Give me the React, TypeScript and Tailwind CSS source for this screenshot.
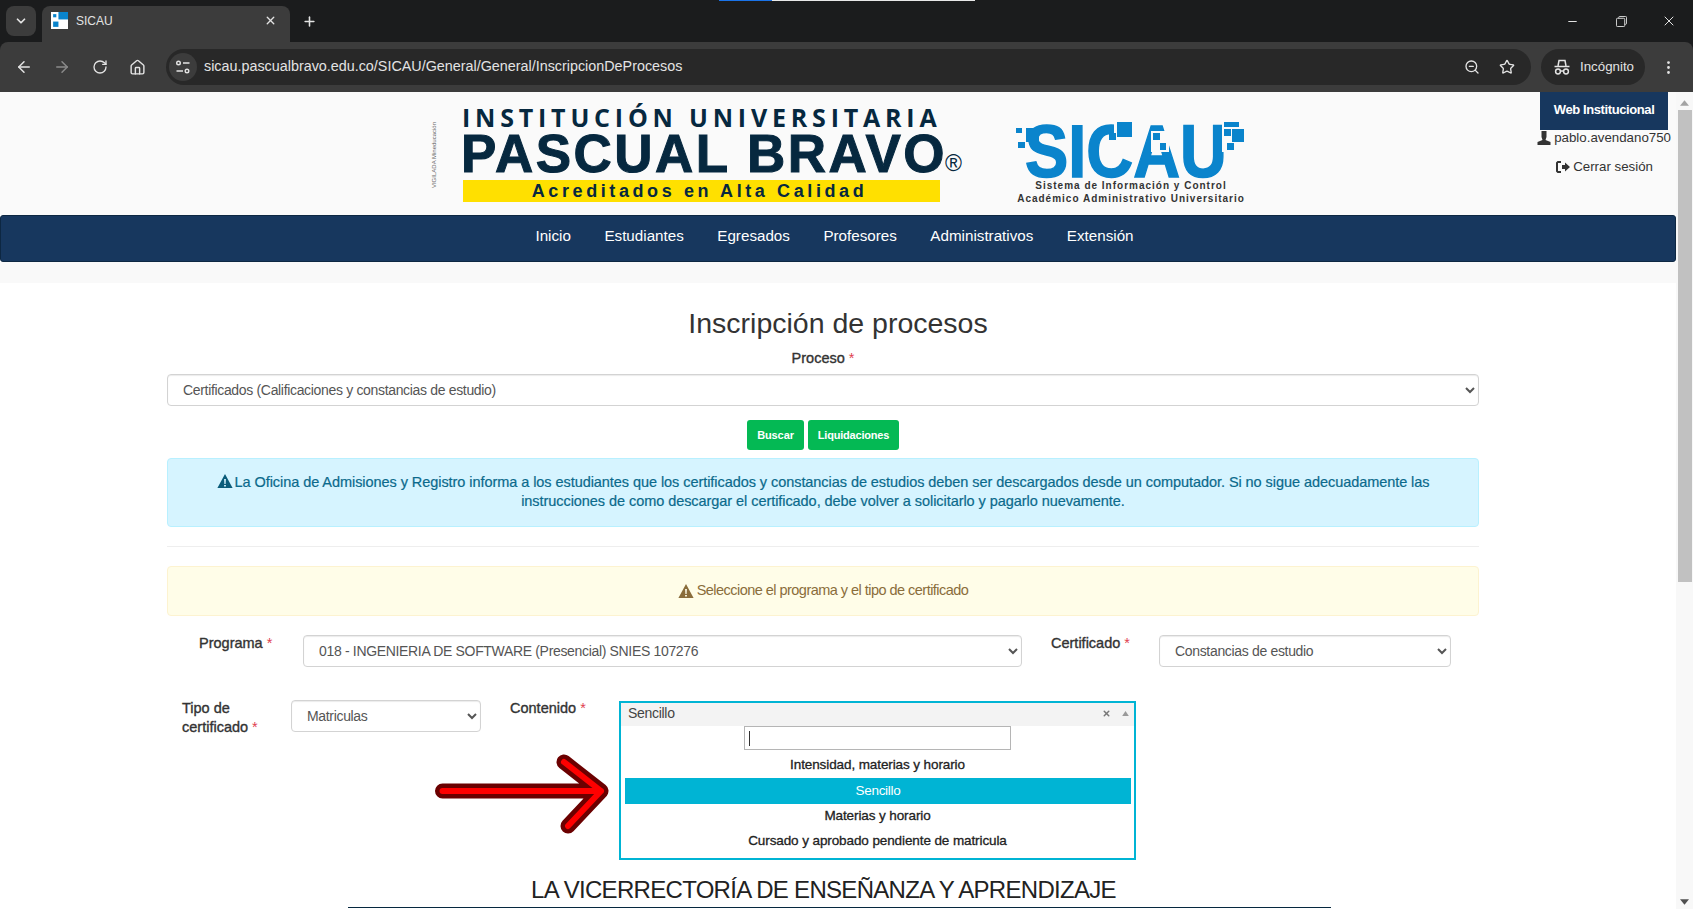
import React from 'react';
import { ArrowLeft, ArrowRight, RotateCw, Home, Star, ChevronDown, X, Plus, Minus, ZoomOut, EllipsisVertical } from 'lucide-react';

const Required = () => <span className="text-[#e0414f] [-webkit-text-stroke:0px]"> *</span>;

const AlertIcon = ({ className }: { className: string }) => (
  <svg viewBox="0 0 16 16" className={className}>
    <path fillRule="evenodd" fill="currentColor" d="M8 1 L15.6 15 H0.4 Z M7.1 6 L7.4 11 H8.6 L8.9 6 Z M7.1 12 V13.6 H8.9 V12 Z" />
  </svg>
);

const TuneIcon = () => (
  <svg viewBox="0 0 16 16" className="h-4 w-4 text-[#e3e3e3]" fill="none" stroke="currentColor" strokeWidth="1.4">
    <circle cx="3.5" cy="4" r="1.8" />
    <path d="M8 4h6.5M1.5 12H8" />
    <circle cx="12" cy="12" r="1.8" />
  </svg>
);

const IncognitoIcon = () => (
  <svg viewBox="0 0 18 18" className="h-[18px] w-[18px] text-[#e3e3e3]" fill="none" stroke="currentColor" strokeWidth="1.5">
    <path d="M5 8 L6 2.5 H12 L13 8" />
    <path d="M1.5 8.5 H16.5" />
    <circle cx="5" cy="13.5" r="2.4" />
    <circle cx="13" cy="13.5" r="2.4" />
    <path d="M7.4 13 H10.6" />
  </svg>
);

const RestoreIcon = () => (
  <svg viewBox="0 0 12 12" className="h-[11px] w-[11px] text-[#e3e3e3]" fill="none" stroke="currentColor" strokeWidth="1">
    <rect x="0.5" y="2.5" width="9" height="9" rx="1" />
    <path d="M3 2.5 V1.5 A1 1 0 0 1 4 0.5 H10.5 A1 1 0 0 1 11.5 1.5 V8 A1 1 0 0 1 10.5 9 H9.5" />
  </svg>
);

const Favicon = () => (
  <svg viewBox="0 0 16 16" className="h-[17px] w-[17px] shrink-0">
    <rect width="16" height="16" fill="#ffffff" />
    <rect x="2" y="2" width="3" height="3" fill="#0a84cc" />
    <rect x="7" y="0" width="9" height="7" fill="#0a84cc" />
    <rect x="2" y="9" width="5" height="5" fill="#0a84cc" />
  </svg>
);

const ChromeBar = () => (
  <div className="relative shrink-0 bg-[#1b1c1d]">
    <div className="absolute left-[719px] top-0 flex h-[1px] w-[256px]">
      <div className="w-[53px] bg-[#1a73e8]" />
      <div className="flex-1 bg-[#e8e8e8]" />
    </div>
    {/* tab strip */}
    <div className="flex h-[42px] items-end pl-[6px] text-[#e3e3e3]">
      <div className="mb-[6px] flex h-[30px] w-[30px] items-center justify-center rounded-lg bg-[#3c3c3c]">
        <ChevronDown size={14} strokeWidth={3} />
      </div>
      <div className="ml-[6px] flex h-[36px] w-[248px] items-center rounded-t-lg bg-[#3c3c3c] pb-[7px] pl-[9px] pr-[13px]">
        <Favicon />
        <span className="ml-[8px] flex-1 text-[12px]">SICAU</span>
        <X size={13} strokeWidth={2.5} />
      </div>
      <div className="mb-[11px] ml-[9px] flex h-[20px] w-[20px] items-center justify-center">
        <Plus size={15} strokeWidth={2.5} />
      </div>
      <div className="mb-[13px] ml-auto flex items-center">
        <div className="flex w-[49px] justify-center"><Minus size={13} /></div>
        <div className="flex w-[48px] justify-center"><RestoreIcon /></div>
        <div className="flex w-[48px] justify-center"><X size={16} strokeWidth={1.5} /></div>
      </div>
    </div>
    {/* toolbar */}
    <div className="flex h-[50px] items-center rounded-t-lg bg-[#3c3c3c] pl-[15px] pr-[14px] text-[#e3e3e3]">
      <ArrowLeft size={18} />
      <ArrowRight size={18} className="ml-[20px] text-[#8a8a8a]" />
      <RotateCw size={16} className="ml-[21px]" />
      <Home size={17} className="ml-[21px]" />
      <div className="ml-[20px] flex h-[36px] w-[1365px] items-center rounded-full bg-[#282828] pl-[3px] pr-[12px]">
        <div className="flex h-[28px] w-[28px] items-center justify-center rounded-full bg-[#3c3c3c]"><TuneIcon /></div>
        <span className="ml-[7px] flex-1 text-[14.35px] text-[#e3e3e3]">sicau.pascualbravo.edu.co/SICAU/General/General/InscripcionDeProcesos</span>
        <ZoomOut size={16} className="mr-[19px]" />
        <Star size={16} className="mr-[4px]" />
      </div>
      <div className="ml-[10px] flex h-[36px] w-[104px] items-center rounded-full bg-[#282828] pl-[12px] text-[13.3px]">
        <IncognitoIcon />
        <span className="ml-[9px]">Incógnito</span>
      </div>
      <EllipsisVertical size={17} className="ml-[15px]" />
    </div>
  </div>
);

const PascalLogo = () => (
  <div className="flex items-center">
    <span className="mr-[25px] mt-[4px] w-[8px] text-center text-[6px] leading-none whitespace-nowrap text-[#666] [writing-mode:vertical-rl] rotate-180">VIGILADA Mineducación</span>
    <div className="w-[495px]">
      <div className="ml-[-2px] w-[478px] text-center text-[25px] leading-[26px] font-bold tracking-[4.8px] whitespace-nowrap text-[#06283f] font-['Open_Sans',sans-serif]">INSTITUCIÓN UNIVERSITARIA</div>
      <div className="ml-[-3px] mt-[-1px] flex items-end whitespace-nowrap text-[#06283f]">
        <span className="text-[53px] leading-[50px] font-bold tracking-[2.5px] [-webkit-text-stroke:1px_#06283f]">PASCUAL BRAVO</span>
        <span className="mb-[4px] ml-[-2px] text-[23px] leading-none">®</span>
      </div>
      <div className="ml-[-1px] mt-[1px] h-[22px] w-[477px] bg-[#ffe000] pr-[4px] text-center text-[18px] leading-[22px] font-bold tracking-[3.6px] whitespace-nowrap text-[#06283f]">Acreditados en Alta Calidad</div>
    </div>
  </div>
);

const SicauLogo = () => (
  <div className="flex w-[232px] flex-col items-center">
    <svg viewBox="0 0 232 56" className="h-[56px] w-[232px] overflow-visible" stroke="none">
      <text x="10" y="55" textLength="202" lengthAdjust="spacingAndGlyphs" fontSize="75" fontWeight="700" fill="#0a84cc" stroke="#0a84cc" strokeWidth="1.5" fontFamily="Liberation Sans, sans-serif">SICAU</text>
      <rect x="99" y="0" width="21" height="21" fill="#fafafa" />
      <rect x="102" y="0" width="15" height="15" fill="#0a84cc" />
      <rect x="94" y="11" width="7" height="7" fill="#0a84cc" />
      <rect x="136" y="9" width="18" height="21" fill="#fafafa" />
      <rect x="138" y="11" width="7" height="7" fill="#0a84cc" />
      <rect x="145" y="21" width="6" height="7" fill="#0a84cc" />
      <rect x="1" y="6" width="6" height="5" fill="#0a84cc" />
      <rect x="11" y="6" width="13" height="14" fill="#0a84cc" />
      <rect x="3" y="20" width="7" height="6" fill="#0a84cc" />
      <rect x="207" y="0" width="25" height="30" fill="#fafafa" />
      <rect x="209" y="0" width="15" height="5" fill="#0a84cc" />
      <rect x="209" y="7" width="7" height="7" fill="#0a84cc" />
      <rect x="217" y="7" width="12" height="13" fill="#0a84cc" />
      <rect x="212" y="21" width="7" height="7" fill="#0a84cc" />
    </svg>
    <div className="mt-[1px] text-center text-[10px] leading-[13px] font-bold tracking-[1px] whitespace-nowrap text-[#333]">
      <div>Sistema de Información y Control</div>
      <div>Académico Administrativo Universitario</div>
    </div>
  </div>
);

const Header = () => (
  <div className="relative flex h-[123px] items-start bg-[#fafafa] pl-[431px] pt-[12px]">
    <PascalLogo />
    <div className="ml-[56px] pt-[18px]"><SicauLogo /></div>
    <div className="absolute right-[5px] top-0 flex flex-col items-center text-[13.3px] text-[#333]">
      <div className="flex h-[38px] w-[128px] items-center justify-center bg-[#17375e] pb-[2px] text-[13px] font-bold tracking-[-0.4px] text-white">Web Institucional</div>
      <div className="flex h-[16px] items-center whitespace-nowrap">
        <svg viewBox="0 0 14 14" className="mr-[3px] h-[14px] w-[14px] text-[#333]"><path fill="currentColor" d="M4.5 0h5v6L8.5 9 13.5 11v3H0.5v-3L5.5 9 4.5 6z" /></svg>
        pablo.avendano750
      </div>
      <div className="mt-[11px] flex items-center whitespace-nowrap">
        <svg viewBox="0 0 16 14" className="mr-[2px] h-[14px] w-[16px] text-[#333]"><path fill="currentColor" d="M6 1H2.5L1 2.5v9L2.5 13H6v-2H3V3h3z M7 5h3V2.5L15 7l-5 4.5V9H7z" /></svg>
        Cerrar sesión
      </div>
    </div>
  </div>
);

const Nav = () => (
  <div className="flex h-[47px] items-center justify-center gap-[33.5px] rounded-[3px] border border-[#0d2742] bg-[#17375e] pb-[4px] pr-[7px] text-[15.2px] text-white">
    {['Inicio', 'Estudiantes', 'Egresados', 'Profesores', 'Administrativos', 'Extensión'].map((item) => (
      <span key={item}>{item}</span>
    ))}
  </div>
);

const selectClass = 'h-[32px] rounded border border-[#d3d3d3] bg-white pl-[11px] text-[14px] tracking-[-0.33px] text-[#555] shadow-[inset_0_1px_1px_rgba(0,0,0,0.08)]';
const labelClass = 'mt-[-1px] text-[14.5px] leading-[19px] text-[#333] [-webkit-text-stroke:0.35px_#333]';

const ContenidoList = () => (
  <div className="mt-[1px] h-[159px] w-[517px] border-2 border-[#00b4d4] text-center text-[13.5px] tracking-[-0.1px] text-[#222] [-webkit-text-stroke:0.3px_#222]">
    <div className="flex h-[23px] items-center bg-[#f3f3f3] pb-[2px] pl-[7px] pr-[5px] text-[14px] tracking-[-0.3px] text-[#444] [-webkit-text-stroke:0px]">
      <span className="flex-1 text-left">Sencillo</span>
      <X size={9} strokeWidth={4} className="mr-[11px] text-[#777]" />
      <svg viewBox="0 0 8 6" className="h-[5px] w-[7px] text-[#999]"><path fill="currentColor" d="M4 0l4 6H0z" /></svg>
    </div>
    <div className="flex justify-center">
      <div className="flex h-[24px] w-[267px] items-center border border-[#b5b5b5] bg-white pl-[4px]">
        <div className="h-[15px] w-[1px] bg-[#333]" />
      </div>
    </div>
    <div className="flex h-[28px] items-center justify-center pt-[3px]">Intensidad, materias y horario</div>
    <div className="ml-[4px] mr-[3px] flex h-[26px] items-center justify-center bg-[#00b4d4] tracking-[-0.3px] text-white [-webkit-text-stroke:0px]">Sencillo</div>
    <div className="flex h-[24px] items-center justify-center">Materias y horario</div>
    <div className="flex h-[26px] items-center justify-center">Cursado y aprobado pendiente de matricula</div>
  </div>
);

const RedArrow = () => (
  <svg viewBox="0 0 190 90" className="absolute left-[258px] top-[50px] h-[90px] w-[190px]" fill="none" strokeLinecap="round" strokeLinejoin="round">
    <path d="M17.5 41 H176 M139 12 L176 41 L143 76" stroke="#6b0000" strokeWidth="15" />
    <path d="M17.5 41 H176 M139 12 L176 41 L143 76" stroke="#ff0000" strokeWidth="6" />
  </svg>
);

export default function App() {
  return (
    <div className="flex h-[909px] w-[1693px] flex-col overflow-hidden bg-white font-['Liberation_Sans',sans-serif]">
      <ChromeBar />
      <div className="flex min-h-0 flex-1">
        <div className="min-w-0 flex-1 overflow-hidden">
          <Header />
          <Nav />
          <div className="h-[21px] bg-[#f9f9f9]" />

          <h1 className="mt-[20px] text-center text-[28.5px] leading-[40px] text-[#333]">Inscripción de procesos</h1>

          <div className="ml-[167px] w-[1312px]">
            <div className="mt-[6px] text-center text-[14.5px] leading-[18px] text-[#333] [-webkit-text-stroke:0.35px_#333]">Proceso<Required /></div>
            <select className={`${selectClass} mt-[7px] w-full`} defaultValue="c">
              <option value="c">Certificados (Calificaciones y constancias de estudio)</option>
            </select>

            <div className="mt-[14px] flex justify-center gap-[4px]">
              <button className="h-[30px] w-[57px] rounded-[3px] bg-[#04b954] text-[11px] font-bold tracking-[-0.1px] text-white">Buscar</button>
              <button className="h-[30px] w-[91px] rounded-[3px] bg-[#04b954] text-[11px] font-bold tracking-[-0.2px] text-white">Liquidaciones</button>
            </div>

            <div className="mt-[8px] h-[69px] rounded border border-[#b8f0ff] bg-[#d6f4ff] px-[20px] pt-[14px] text-center text-[14.5px] leading-[19px] tracking-[-0.06px] text-[#0b6a8c] [-webkit-text-stroke:0.2px_#0b6a8c]">
              <AlertIcon className="mr-[2px] inline h-[16px] w-[16px] align-[-2px] text-[#0b5c7a]" />
              La Oficina de Admisiones y Registro informa a los estudiantes que los certificados y constancias de estudios deben ser descargados desde un computador. Si no sigue adecuadamente las instrucciones de como descargar el certificado, debe volver a solicitarlo y pagarlo nuevamente.
            </div>

            <hr className="mt-[19px] border-[#eeeeee]" />

            <div className="mt-[19px] flex h-[50px] items-center justify-center rounded border border-[#fdf3d0] bg-[#fffde8] text-[14.5px] tracking-[-0.53px] text-[#8a6d3b]">
              <AlertIcon className="mr-[3px] h-[16px] w-[16px] text-[#8a6d3b]" />
              Seleccione el programa y el tipo de certificado
            </div>

            <div className="mt-[19px] flex items-start">
              <div className={`${labelClass} w-[136px] pl-[32px]`}>Programa<Required /></div>
              <select className={`${selectClass} w-[719px]`} defaultValue="p">
                <option value="p">018 - INGENIERIA DE SOFTWARE (Presencial) SNIES 107276</option>
              </select>
              <div className={`${labelClass} ml-[29px] w-[108px]`}>Certificado<Required /></div>
              <select className={`${selectClass} w-[292px]`} defaultValue="c">
                <option value="c">Constancias de estudio</option>
              </select>
            </div>

            <div className="relative mt-[33px] flex items-start">
              <div className={`${labelClass} ml-[15px] w-[108px]`}>Tipo de certificado<Required /></div>
              <select className={`${selectClass} ml-[1px] w-[190px]`} defaultValue="m">
                <option value="m">Matriculas</option>
              </select>
              <div className={`${labelClass} ml-[29px] w-[109px]`}>Contenido<Required /></div>
              <ContenidoList />
              <RedArrow />
            </div>
          </div>

          <h2 className="mt-[13px] ml-[-29px] text-center text-[24px] leading-[34px] tracking-[-0.7px] text-[#222]">LA VICERRECTORÍA DE ENSEÑANZA Y APRENDIZAJE</h2>
          <div className="ml-[348px] h-[1px] w-[983px] bg-[#06283f]" />
        </div>

        {/* scrollbar */}
        <div className="flex w-[17px] shrink-0 flex-col items-center bg-[#f8f8f8]">
          <svg viewBox="0 0 10 6" className="mt-[8px] h-[6px] w-[9px] text-[#a3a3a3]"><path fill="currentColor" d="M5 0l5 6H0z" /></svg>
          <div className="mt-[4px] h-[472px] w-[14px] bg-[#c1c1c1]" />
          <svg viewBox="0 0 10 6" className="mt-auto mb-[4px] h-[6px] w-[9px] text-[#505050]"><path fill="currentColor" d="M0 0h10L5 6z" /></svg>
        </div>
      </div>
    </div>
  );
}
